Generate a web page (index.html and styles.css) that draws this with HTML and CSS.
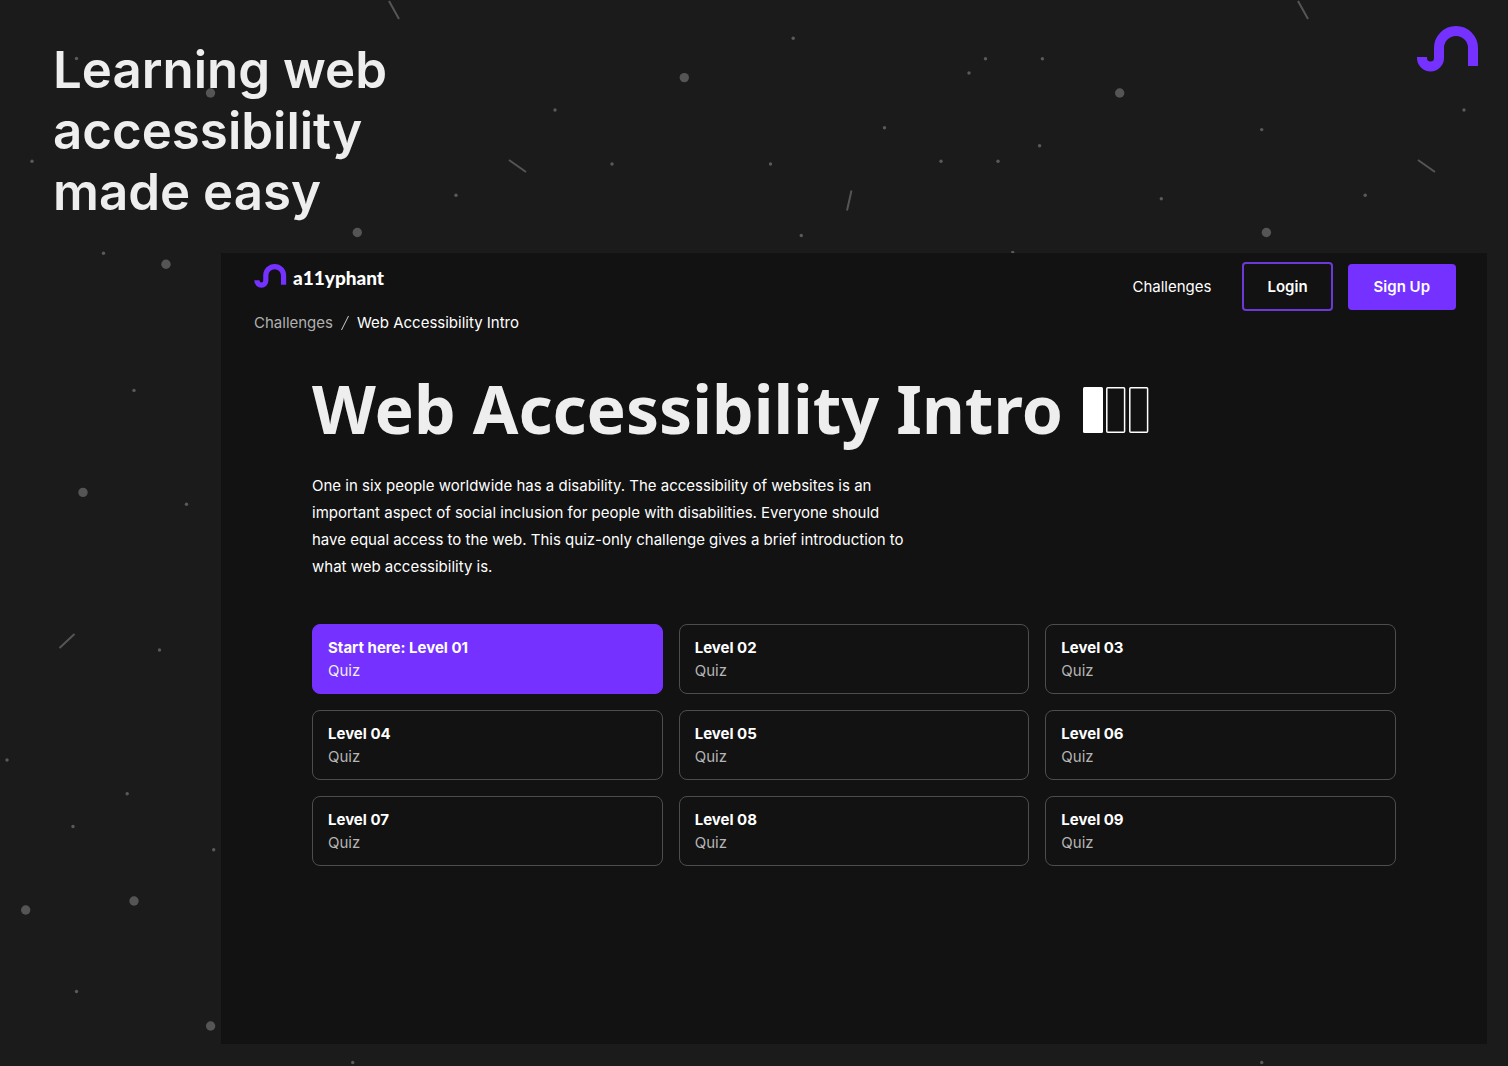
FILE: index.html
```html
<!DOCTYPE html>
<html lang="en">
<head>
<meta charset="utf-8">
<meta name="viewport" content="width=device-width, initial-scale=1">
<title>a11yphant – Web Accessibility Intro</title>
<link rel="stylesheet" href="styles.css">
</head>
<body>
<svg class="confetti" viewBox="0 0 1508 1066" preserveAspectRatio="xMidYMid slice" aria-hidden="true">
  <g class="confetti-large">
    <circle cx="210.500" cy="93" r="4.700"/><circle cx="357.300" cy="232.500" r="4.700"/><circle cx="166" cy="264.300" r="4.700"/>
    <circle cx="684.300" cy="77.600" r="4.700"/><circle cx="1119.700" cy="93" r="4.700"/><circle cx="1266.400" cy="232.500" r="4.700"/>
    <circle cx="83" cy="492.400" r="4.700"/><circle cx="134" cy="901" r="4.700"/><circle cx="25.700" cy="910" r="4.700"/><circle cx="210.600" cy="1026" r="4.700"/>
  </g>
  <g class="confetti-small">
    <circle cx="76.500" cy="58.500" r="1.700"/><circle cx="32" cy="161.300" r="1.700"/><circle cx="456" cy="195.300" r="1.700"/><circle cx="103.500" cy="253.200" r="1.700"/>
    <circle cx="793.200" cy="38.200" r="1.700"/><circle cx="985.500" cy="58.700" r="1.700"/><circle cx="969" cy="73" r="1.700"/><circle cx="555" cy="110" r="1.700"/>
    <circle cx="884.500" cy="127.800" r="1.700"/><circle cx="612" cy="164" r="1.700"/><circle cx="770.500" cy="164" r="1.700"/><circle cx="941" cy="161.300" r="1.700"/>
    <circle cx="998" cy="161.300" r="1.700"/><circle cx="801.300" cy="235.500" r="1.700"/><circle cx="1042.400" cy="58.700" r="1.700"/><circle cx="1039.600" cy="145.800" r="1.700"/>
    <circle cx="1261.700" cy="129.600" r="1.700"/><circle cx="1161.300" cy="198.700" r="1.700"/><circle cx="1365.200" cy="195.300" r="1.700"/><circle cx="1464" cy="110" r="1.700"/>
    <circle cx="1012.700" cy="252.500" r="1.700"/><circle cx="134" cy="390.400" r="1.700"/><circle cx="186.500" cy="504.200" r="1.700"/><circle cx="159.500" cy="650" r="1.700"/>
    <circle cx="7" cy="760" r="1.700"/><circle cx="127.200" cy="793.700" r="1.700"/><circle cx="73" cy="826.500" r="1.700"/><circle cx="213.700" cy="849.700" r="1.700"/>
    <circle cx="76.500" cy="991.500" r="1.700"/><circle cx="352.700" cy="1062.500" r="1.700"/><circle cx="1261.700" cy="1062.500" r="1.700"/>
  </g>
  <path class="confetti-lines" d="M389 1l10 18M1298 1l10 18M509 160l17 12M1418 160l17 12M851.500 190.500l-4.500 20M59.500 648l15-14"/>
</svg>

<header class="masthead">
  <h2 class="tagline">Learning web accessibility made easy</h2>
  <svg class="mark" viewBox="0 0 62 46" role="img" aria-label="a11yphant"><path d="M5 31v1a8.500 8.500 0 0 0 17 0V22a17 17 0 0 1 34 0v18"/></svg>
</header>

<div class="window">
  <div class="topbar">
    <div class="brand-area">
      <a class="brand" href="#">
        <svg class="brand-mark" viewBox="0 0 62 46" aria-hidden="true"><path d="M5 31v1a8.500 8.500 0 0 0 17 0V22a17 17 0 0 1 34 0v18"/></svg>
        <span class="brand-name">a11yphant</span>
      </a>
      <nav class="breadcrumbs" aria-label="Breadcrumb">
        <a class="crumb" href="#">Challenges</a>
        <svg class="slash" viewBox="0 0 8 16" aria-hidden="true"><path d="M7.500 1L.5 15"/></svg>
        <span aria-current="page">Web Accessibility Intro</span>
      </nav>
    </div>
    <nav class="actions" aria-label="Main">
      <a class="nav-link" href="#">Challenges</a>
      <button class="button button-outline" type="button">Login</button>
      <button class="button button-filled" type="button">Sign Up</button>
    </nav>
  </div>

  <main class="content">
    <div class="title-row">
      <h1 class="title">Web Accessibility Intro</h1>
      <svg class="difficulty" viewBox="0 0 66 46" role="img" aria-label="Difficulty: easy">
        <rect class="bar-on" x="0" y="0" width="20" height="46" rx="1.500"/>
        <rect class="bar-off" x="23.800" y="0.800" width="17.800" height="44.400" rx="1"/>
        <rect class="bar-off" x="46.800" y="0.800" width="17.800" height="44.400" rx="1"/>
      </svg>
    </div>
    <p class="intro">One in six people worldwide has a disability. The accessibility of websites is an important aspect of social inclusion for people with disabilities. Everyone should have equal access to the web. This quiz-only challenge gives a brief introduction to what web accessibility is.</p>
    <div class="levels">
      <a class="level level-start" href="#"><strong>Start here: Level 01</strong><span class="kind">Quiz</span></a>
      <a class="level" href="#"><strong>Level 02</strong><span class="kind">Quiz</span></a>
      <a class="level" href="#"><strong>Level 03</strong><span class="kind">Quiz</span></a>
      <a class="level" href="#"><strong>Level 04</strong><span class="kind">Quiz</span></a>
      <a class="level" href="#"><strong>Level 05</strong><span class="kind">Quiz</span></a>
      <a class="level" href="#"><strong>Level 06</strong><span class="kind">Quiz</span></a>
      <a class="level" href="#"><strong>Level 07</strong><span class="kind">Quiz</span></a>
      <a class="level" href="#"><strong>Level 08</strong><span class="kind">Quiz</span></a>
      <a class="level" href="#"><strong>Level 09</strong><span class="kind">Quiz</span></a>
    </div>
  </main>
</div>
</body>
</html>
```
FILE: styles.css
```css
* { box-sizing: border-box; }

body {
  margin: 0;
  min-height: 100vh;
  display: flex;
  flex-direction: column;
  position: relative;
  background: #1b1b1b;
  color: #fff;
  font-family: Inter, "Noto Sans", sans-serif;
  font-size: 15px;
  line-height: 24px;
}

a { color: inherit; text-decoration: none; }
h1, h2, p { margin: 0; }

/* decorative backdrop */
.confetti {
  position: absolute;
  inset: 0;
  width: 100%;
  height: 100%;
  z-index: -1;
}
.confetti-large { fill: #555; }
.confetti-small { fill: #5a5a5a; }
.confetti-lines { fill: none; stroke: #555; stroke-width: 2px; }

.masthead {
  display: flex;
  justify-content: space-between;
  align-items: flex-start;
  padding: 26px 29px 31px 53px;
}
.tagline {
  max-width: 370px;
  padding-top: 13px;
  color: #eee;
  font-size: 51px;
  font-weight: 600;
  line-height: 61px;
}
.mark, .brand-mark { fill: none; stroke: #7431ff; stroke-width: 10px; flex: none; }
.mark { width: 62px; height: 46px; }
.brand-mark { width: 33px; height: 24px; }

.window {
  flex: 1;
  margin: 0 21px 22px 221px;
  background: #121212;
}

.topbar {
  display: flex;
  justify-content: space-between;
  align-items: flex-start;
  padding: 9px 31px 0 33px;
}
.brand { display: flex; align-items: center; gap: 6px; padding-top: 2px; }
.brand-name { padding-top: 3px; font-family: Lato, sans-serif; font-size: 19px; font-weight: 900; line-height: 21px; }
.breadcrumbs { display: flex; align-items: center; gap: 8px; padding-top: 23px; }
.crumb { color: #b0b0b0; }
.slash { width: 8px; height: 16px; fill: none; stroke: #ccc; stroke-width: 1px; }

.actions { display: flex; align-items: center; gap: 15px; }
.nav-link { margin-right: 16px; }
.button {
  height: 46px;
  padding: 0 26px;
  border: 0;
  border-radius: 4px;
  color: #fff;
  font: inherit;
  font-weight: 600;
}
.button-outline { height: 49px; padding: 0 23px; border: 2px solid #6c38d8; background: transparent; }
.button-filled { background: #7431ff; }

.content { padding: 33px 91px; }
.title-row { display: flex; align-items: center; gap: 20px; }
.title { color: #eee; font-family: "Noto Sans", sans-serif; font-size: 66px; font-weight: 700; line-height: 80px; }
.difficulty { width: 66px; height: 46px; margin-top: 4px; flex: none; }
.bar-on { fill: #fff; }
.bar-off { fill: none; stroke: #fff; stroke-width: 1.500px; }

.intro { max-width: 600px; padding-top: 24px; line-height: 27px; }

.levels {
  display: grid;
  grid-template-columns: repeat(3, 1fr);
  gap: 16px;
  padding-top: 44px;
}
.level {
  display: flex;
  flex-direction: column;
  padding: 11px 15px;
  border: 1px solid #4d4d4d;
  border-radius: 8px;
  line-height: 23px;
}
.kind { color: #b5b5b5; }
.level-start { background: #7431ff; border-color: #7431ff; }
.level-start .kind { color: #eee; }
```
